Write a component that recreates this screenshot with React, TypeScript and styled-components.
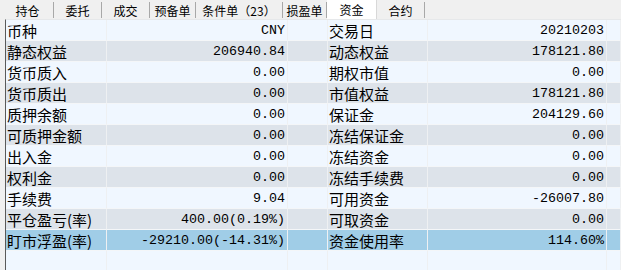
import React from 'react';
import styled, { createGlobalStyle } from 'styled-components';

const GlobalStyle = createGlobalStyle`
  html, body {
    margin: 0;
    padding: 0;
    background: #f0f0f0;
  }
  body {
    width: 621px;
    height: 270px;
    overflow: hidden;
    font-family: "Noto Sans CJK SC", "Liberation Sans", sans-serif;
  }
`;

const Page = styled.div`
  display: flex;
  flex-direction: column;
  width: 621px;
  height: 270px;
`;

const TabBar = styled.div`
  display: flex;
  height: 19px;
  padding-left: 2px;
  background: #f0f0f0;
  box-sizing: border-box;
`;

const Tab = styled.div<{ $w: number; $active?: boolean }>`
  width: ${({ $w }) => $w}px;
  height: 19px;
  display: flex;
  align-items: center;
  justify-content: center;
  box-sizing: border-box;
  font-size: 12px;
  color: #000;
  background: ${({ $active }) => ($active ? '#ffffff' : 'transparent')};
  border-right: 1px solid ${({ $active }) => ($active ? '#d8d8d8' : '#a8a8a8')};
  margin-top: ${({ $active }) => ($active ? '0' : '2px')};
  height: ${({ $active }) => ($active ? '19px' : '16px')};
  white-space: pre;
`;

const Frame = styled.div`
  flex: 1;
  display: flex;
  padding-left: 5px;
  background: #f0f0f0;
`;

const Table = styled.div`
  flex: 1;
  display: grid;
  grid-template-columns: 101px 181px 40px 100px 179px 1fr;
  grid-template-rows: repeat(11, 21px) 1fr;
  border-left: 1px solid #5a5a5a;
  border-top: 1px solid #e6e8ea;
  background: #f0f7ff;
`;

const Cell = styled.div<{ $tone: 'light' | 'gray' | 'sel' }>`
  box-sizing: border-box;
  height: 21px;
  display: flex;
  align-items: center;
  border-right: 1px solid #eef0f2;
  border-bottom: 1px solid #f4f6f8;
  background: ${({ $tone }) =>
    $tone === 'sel' ? '#a0cde7' : $tone === 'gray' ? '#dde3ea' : '#f0f7ff'};
  overflow: hidden;
  white-space: pre;
`;

const Label = styled(Cell)`
  padding-left: 1px;
  font-size: 15px;
  color: #000;
`;

const Value = styled(Cell)`
  justify-content: flex-end;
  padding-right: 2px;
  font-family: "Liberation Mono", "DejaVu Sans Mono", monospace;
  font-size: 13.33px;
  color: #000;
`;

const Filler = styled.div`
  box-sizing: border-box;
  border-right: 1px solid #eef0f2;
  background: #f0f7ff;
`;

const tabs: { t: string; w: number; active?: boolean }[] = [
  { t: '持仓', w: 52 },
  { t: '委托', w: 48 },
  { t: '成交', w: 48 },
  { t: '预备单', w: 46 },
  { t: '条件单（23）', w: 87 },
  { t: '损盈单', w: 44 },
  { t: '资金', w: 50, active: true },
  { t: '合约', w: 48 },
];

const rows: [string, string, string, string][] = [
  ['币种', 'CNY', '交易日', '20210203'],
  ['静态权益', '206940.84', '动态权益', '178121.80'],
  ['货币质入', '0.00', '期权市值', '0.00'],
  ['货币质出', '0.00', '市值权益', '178121.80'],
  ['质押余额', '0.00', '保证金', '204129.60'],
  ['可质押金额', '0.00', '冻结保证金', '0.00'],
  ['出入金', '0.00', '冻结资金', '0.00'],
  ['权利金', '0.00', '冻结手续费', '0.00'],
  ['手续费', '9.04', '可用资金', '-26007.80'],
  ['平仓盈亏(率)', '400.00(0.19%)', '可取资金', '0.00'],
  ['盯市浮盈(率)', '-29210.00(-14.31%)', '资金使用率', '114.60%'],
];

export default function App() {
  return (
    <Page>
      <GlobalStyle />
      <TabBar>
        {tabs.map((tab) => (
          <Tab key={tab.t} $w={tab.w} $active={tab.active}>
            {tab.t}
          </Tab>
        ))}
      </TabBar>
      <Frame>
        <Table>
          {rows.map((r, i) => {
            const tone = i === rows.length - 1 ? 'sel' : i % 2 === 1 ? 'gray' : 'light';
            return (
              <React.Fragment key={r[0]}>
                <Label $tone={tone}>{r[0]}</Label>
                <Value $tone={tone}>{r[1]}</Value>
                <Cell $tone={tone} />
                <Label $tone={tone}>{r[2]}</Label>
                <Value $tone={tone}>{r[3]}</Value>
                <Cell $tone={tone} />
              </React.Fragment>
            );
          })}
          <Filler />
          <Filler />
          <Filler />
          <Filler />
          <Filler />
          <Filler />
        </Table>
      </Frame>
    </Page>
  );
}
